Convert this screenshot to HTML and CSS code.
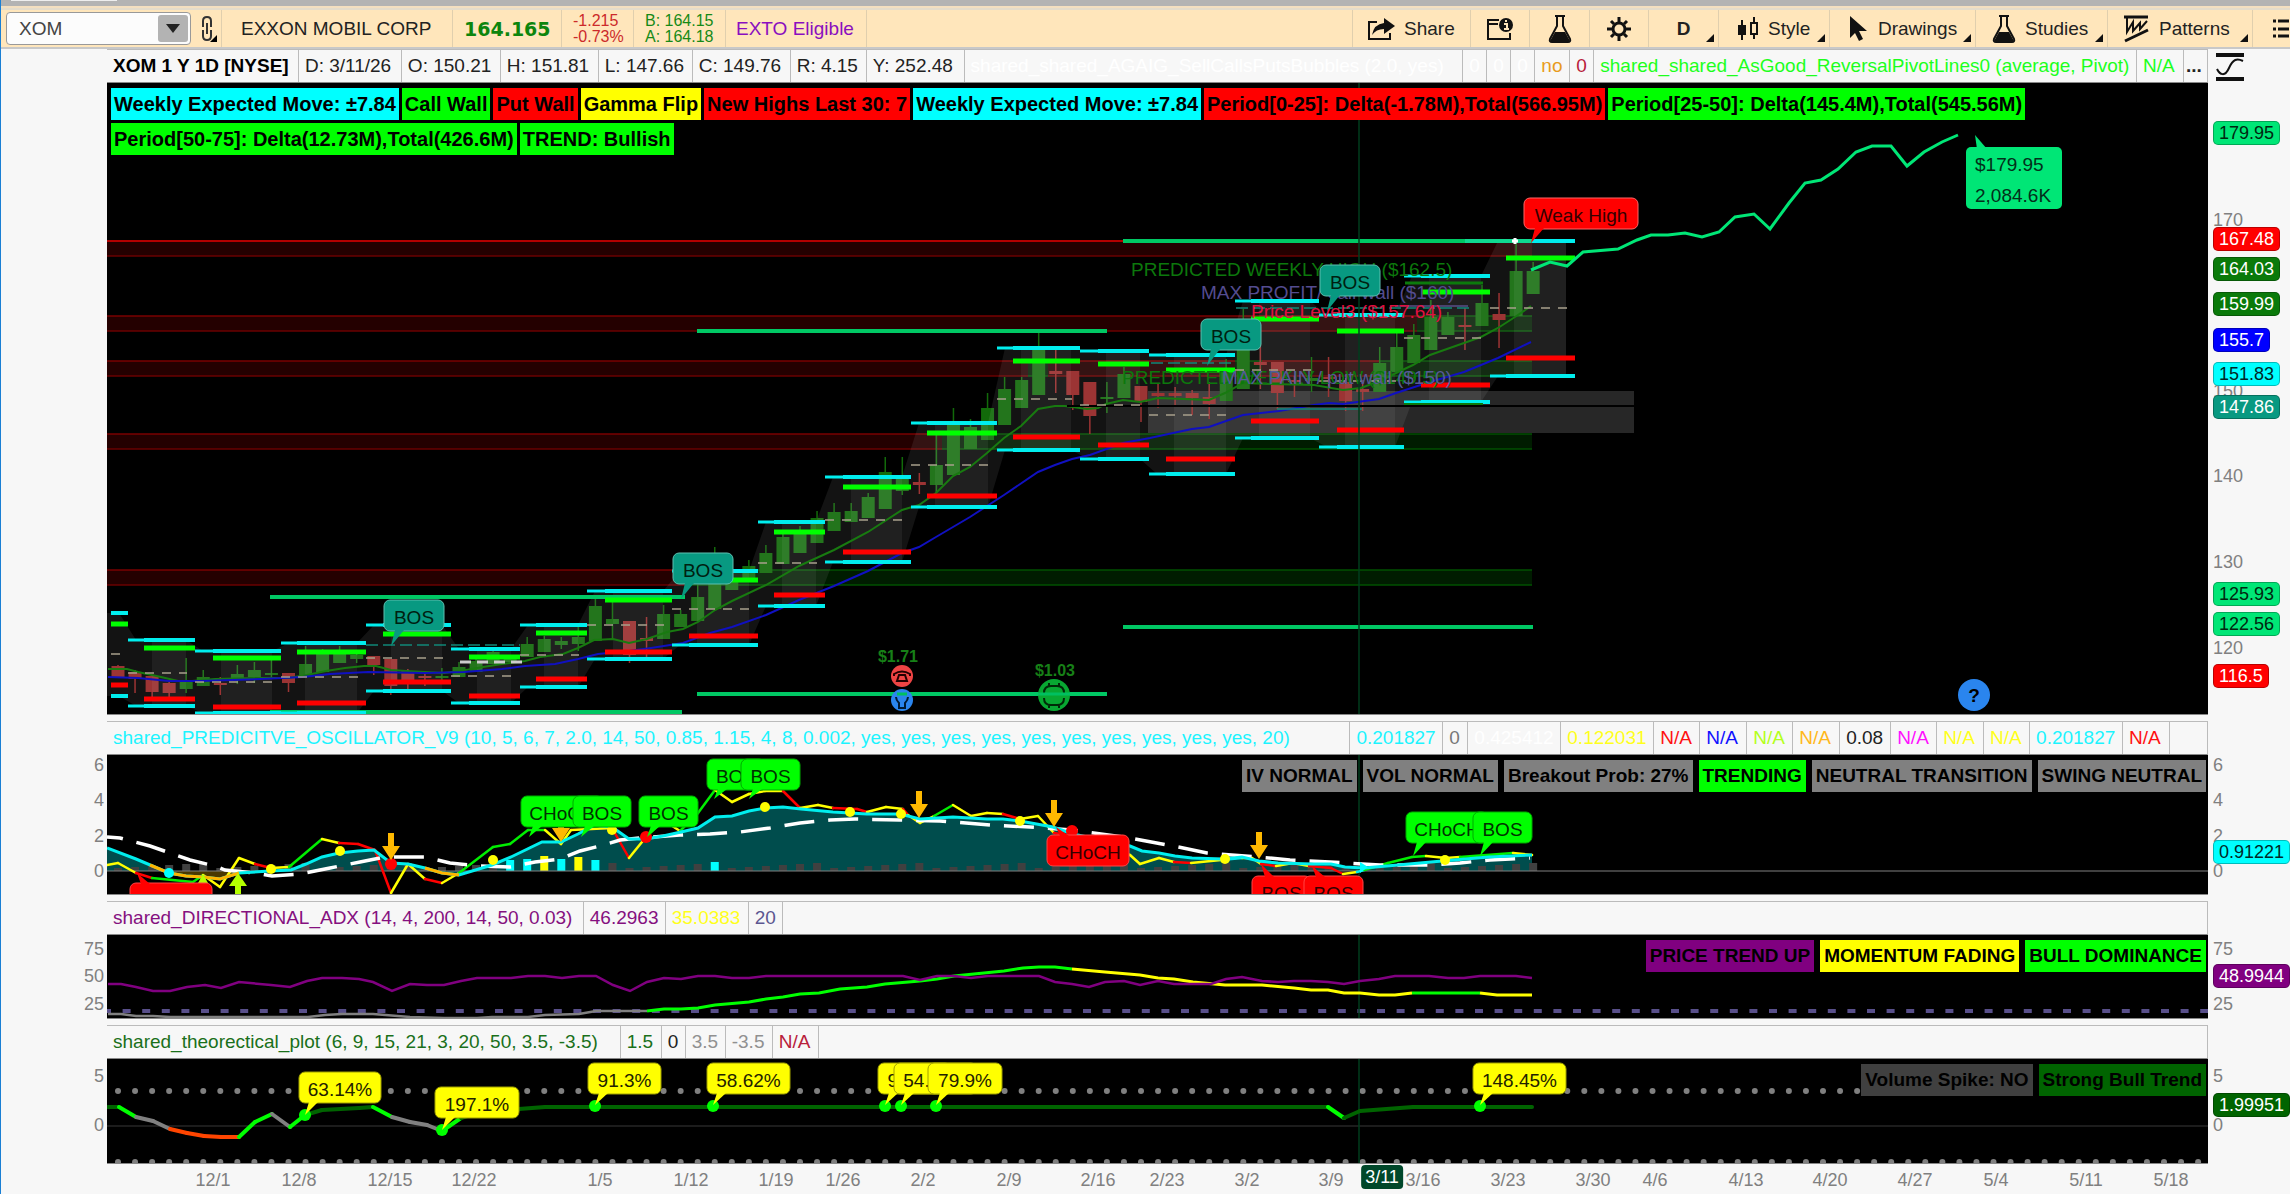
FILE: index.html
```html
<!DOCTYPE html>
<html lang="en">
<head>
<meta charset="utf-8">
<title>XOM - Charts</title>
<link rel="stylesheet" href="styles.css">
</head>
<body>
<svg class="defs" aria-hidden="true">
  <symbol id="flask" viewBox="0 0 24 28"><path d="M7 1h10M9 2v9L2 24q-1 3 2 3h16q3 0 2-3L15 11V2" fill="none" stroke="#111" stroke-width="2"/><path d="M7 17h10l5 9H2z" fill="#111"/></symbol>
</svg>
<div class="topstrip"><span class="tab"></span></div>
<header class="toolbar">
  <div class="seg symbol">
    <label class="symbolbox"><input type="text" value="XOM" aria-label="Symbol"><button class="drop" aria-label="Symbol list"></button></label>
    <button class="link" aria-label="Link color">
      <svg width="18" height="28" viewBox="0 0 18 28"><path d="M3 12V6q0-4 4-4t4 4v6M3 15v6q0 4 4 4t4-4v-6M7 8v11" fill="none" stroke="#333" stroke-width="2"/><path d="M17 20v7h-7z"/></svg>
    </button>
  </div>
  <div class="seg company">EXXON MOBIL CORP</div>
  <div class="seg price">164.165</div>
  <div class="seg change">-1.215<br>-0.73%</div>
  <div class="seg quote">B: 164.15<br>A: 164.18</div>
  <div class="seg exto">EXTO Eligible</div>
  <button class="seg share"><svg width="28" height="24" viewBox="0 0 28 24"><path d="M10 5H2v17h21v-6" fill="none" stroke="#111" stroke-width="2"/><path d="M17 1l11 8-11 8v-5Q9 12 5 18 7 7 17 6z" fill="#111"/></svg>Share</button>
  <button class="seg note" aria-label="News"><svg width="28" height="24" viewBox="0 0 28 24"><path d="M13 3H2v19h22v-6M2 7h10" fill="none" stroke="#111" stroke-width="2"/><circle cx="20" cy="8" r="7" fill="#111"/><path d="M18 7h3v5M18 12h5M20 3v2" stroke="#ffe6bb" stroke-width="2" fill="none"/></svg></button>
  <button class="seg lab" aria-label="Edit studies"><svg width="24" height="28"><use href="#flask"/></svg></button>
  <button class="seg gear" aria-label="Settings"><svg width="26" height="26" viewBox="-13 -13 26 26"><circle r="6" fill="none" stroke="#111" stroke-width="3"/><path d="M0-7v-5M0 7v5M-7 0h-5M7 0h5M5-5l3-3M-5-5l-3-3M5 5l3 3M-5 5l-3 3" stroke="#111" stroke-width="3"/></svg></button>
  <button class="seg period more">D</button>
  <button class="seg style more"><svg width="22" height="24" viewBox="0 0 22 24"><path d="M5 3v20M17 0v6M17 17v5" stroke="#111" stroke-width="2"/><path d="M1 8h8v10H1z" fill="#111"/><path d="M14 6h6v11h-6z" fill="none" stroke="#111" stroke-width="2"/></svg>Style</button>
  <button class="seg drawings more"><svg width="20" height="26" viewBox="0 0 20 26"><path d="M1 0v22l5-5 4 8 4-2-4-8h8z" fill="#111"/></svg>Drawings</button>
  <button class="seg studies more"><svg width="24" height="28"><use href="#flask"/></svg>Studies</button>
  <button class="seg patterns more"><svg width="26" height="28" viewBox="0 0 26 28"><path d="M0 2h24M1 26L24 15" stroke="#111" stroke-width="3"/><path d="M3 3v14l6-10v9l7-8v6l7-8" fill="none" stroke="#111" stroke-width="2"/></svg>Patterns</button>
  <button class="seg list" aria-label="Menu"><svg width="16" height="20" viewBox="0 0 16 20"><path d="M0 2h3M5 2h11M0 10h3M5 10h11M0 17h3M5 17h11" stroke="#111" stroke-width="3"/></svg></button>
</header>
<main>
  <section class="panel" id="main-panel">
    <div class="info info-main">
      <b class="black">XOM 1 Y 1D [NYSE]</b><span>D: 3/11/26</span><span>O: 150.21</span><span>H: 151.81</span><span>L: 147.66</span><span>C: 149.76</span><span>R: 4.15</span><span>Y: 252.48</span><span class="white">shared_shared_AGAIG_SellCallsPutsBubbles (2.0, yes)</span><span class="white">0</span><span class="white">0</span><span class="white">0</span><span class="orange">no</span><span class="crimson">0</span><span class="lime">shared_shared_AsGood_ReversalPivotLines0 (average, Pivot)</span><span class="lime">N/A</span><b class="dots">...</b>
    </div>
    <button class="corner" aria-label="Scale"><svg width="28" height="28" viewBox="0 0 28 28"><path d="M0 2h28M0 26h28" stroke="#111" stroke-width="4"/><path d="M1 16c3 6 8 8 12-1S21 5 27 8" fill="none" stroke="#111" stroke-width="2"/></svg></button>
    <div class="axis left"></div>
    <div class="chart">
      <svg viewBox="107 83 2101 631"></svg>
      <div class="chips chips-left">
        <span class="bg-cyan">Weekly Expected Move: ±7.84</span><span class="bg-lime">Call Wall</span><span class="bg-red">Put Wall</span><span class="bg-yellow">Gamma Flip</span><span class="bg-red">New Highs Last 30: 7</span><span class="bg-cyan">Weekly Expected Move: ±7.84</span><span class="bg-red">Period[0-25]: Delta(-1.78M),Total(566.95M)</span><span class="bg-lime">Period[25-50]: Delta(145.4M),Total(545.56M)</span><span class="bg-lime">Period[50-75]: Delta(12.73M),Total(426.6M)</span><span class="bg-lime">TREND: Bullish</span>
      </div>
    </div>
    <div class="axis right"></div>
  </section>
  <section class="panel" id="osc-panel">
    <div class="info info-osc">
      <span class="cyan">shared_PREDICITVE_OSCILLATOR_V9 (10, 5, 6, 7, 2.0, 14, 50, 0.85, 1.15, 4, 8, 0.002, yes, yes, yes, yes, yes, yes, yes, yes, yes, yes, 20)</span><span class="cyan">0.201827</span><span class="gray">0</span><span class="white">0.425412</span><span class="yellow">0.122031</span><span class="red">N/A</span><span class="blue">N/A</span><span class="chartreuse">N/A</span><span class="amber">N/A</span><span>0.08</span><span class="magenta">N/A</span><span class="yellow">N/A</span><span class="yellow">N/A</span><span class="cyan">0.201827</span><span class="red">N/A</span><span></span>
    </div>
    <div class="axis left"></div>
    <div class="chart">
      <svg viewBox="107 755 2101 139"></svg>
      <div class="chips chips-right">
        <span class="bg-gray">IV NORMAL</span><span class="bg-gray">VOL NORMAL</span><span class="bg-gray">Breakout Prob: 27%</span><span class="bg-lime">TRENDING</span><span class="bg-gray">NEUTRAL TRANSITION</span><span class="bg-gray">SWING NEUTRAL</span>
      </div>
    </div>
    <div class="axis right"></div>
  </section>
  <section class="panel" id="adx-panel">
    <div class="info info-adx">
      <span class="purple">shared_DIRECTIONAL_ADX (14, 4, 200, 14, 50, 0.03)</span><span class="purple">46.2963</span><span class="yellow">35.0383</span><span class="slate">20</span><span></span>
    </div>
    <div class="axis left"></div>
    <div class="chart">
      <svg viewBox="107 935 2101 83"></svg>
      <div class="chips chips-right">
        <span class="bg-purple">PRICE TREND UP</span><span class="bg-yellow">MOMENTUM FADING</span><span class="bg-lime">BULL DOMINANCE</span>
      </div>
    </div>
    <div class="axis right"></div>
  </section>
  <section class="panel" id="theo-panel">
    <div class="info info-theo">
      <span class="green">shared_theorectical_plot (6, 9, 15, 21, 3, 20, 50, 3.5, -3.5)</span><span class="green">1.5</span><span>0</span><span class="silver">3.5</span><span class="silver">-3.5</span><span class="crimson">N/A</span><span></span>
    </div>
    <div class="axis left"></div>
    <div class="chart">
      <svg viewBox="107 1059 2101 104"></svg>
      <div class="chips chips-right">
        <span class="bg-dim">Volume Spike: NO</span><span class="bg-green">Strong Bull Trend</span>
      </div>
    </div>
    <div class="axis right"></div>
  </section>
  <div class="dates"></div>
</main>
<script src="charts.js"></script>
</body>
</html>
```
FILE: styles.css
```css
* { box-sizing: border-box; }
body {
  margin: 0;
  border-left: 1px solid #1a7fd4;
  background: #f7f7f7;
  color: #222;
  font: 19px/24px "Liberation Sans", Arial, sans-serif;
}
button, input { font: inherit; color: inherit; margin: 0; padding: 0; border: 0; background: none; }
svg { display: block; flex: none; }
.defs { position: absolute; width: 0; height: 0; }

.topstrip { height: 8px; background: #b3b3b3; border-bottom: 2px solid #f3dfc0; }
.tab { display: block; width: 106px; height: 1px; margin-left: 10px; background: #eee; }

.toolbar { display: flex; height: 41px; background: #ffe6bb; border-top: 2px solid #e4dccb; border-bottom: 2px solid #c8c8c8; }
.seg { display: flex; align-items: center; gap: 9px; flex: none; border-right: 1px solid #e0cfae; white-space: nowrap; }
.symbol { width: 221px; padding-left: 5px; }
.symbolbox { display: flex; width: 185px; height: 33px; padding: 2px; border: 1px solid #999; border-radius: 4px; background: #fcfcfc; }
.symbolbox input { flex: 1; min-width: 0; padding-left: 10px; color: #444; }
.drop { width: 30px; border-radius: 3px; background: #b3b3b3; }
.drop::after { content: ""; display: block; margin: auto; width: 0; border: 7px solid transparent; border-top: 9px solid #222; border-bottom: 0; }
.company { width: 231px; padding-left: 19px; }
.price { width: 109px; padding-left: 11px; font: bold 19px/24px "DejaVu Sans", sans-serif; color: #0d850d; }
.change, .quote { font-size: 16px; line-height: 16px; padding-left: 11px; }
.change { width: 72px; color: #cc2a2a; }
.quote { width: 92px; color: #168a16; }
.exto { width: 141px; padding-left: 10px; color: #8a0fbf; }
.share { width: 119px; margin-left: auto; padding-left: 14px; border-left: 1px solid #e0cfae; }
.note, .lab, .gear, .period { justify-content: center; }
.note, .lab, .gear { width: 60px; }
.note, .gear { width: 59px; }
.period { width: 70px; font-weight: bold; }
.style { width: 111px; padding-left: 18px; }
.drawings { width: 146px; padding-left: 19px; }
.studies { width: 132px; padding-left: 16px; }
.patterns { width: 145px; padding-left: 16px; }
.list { width: 37px; padding-left: 20px; border: 0; overflow: hidden; }
.more { position: relative; }
.more::after { content: ""; position: absolute; right: 4px; bottom: 5px; border: 4px solid #111; border-top-color: transparent; border-left-color: transparent; }

.panel { display: grid; grid-template-columns: 106px minmax(0, 1fr) 82px; margin-bottom: 6px; }
#theo-panel { margin-bottom: 0; }
.info { display: grid; grid-column: 2; height: 34px; border: 1px solid #bbb; border-bottom-color: #888; border-left-width: 0; background: #f7f7f7; }
.info > * { display: flex; align-items: center; padding-left: 6px; border-right: 1px solid #bbb; white-space: nowrap; overflow: hidden; }
.info > :last-child { border-right: 0; }
.info-main { grid-template-columns: 192fr 103fr 99fr 98fr 94fr 98fr 76fr 98fr 499fr 24fr 24fr 24fr 35fr 24fr 543fr 47fr 23fr; }
.info-osc { grid-template-columns: 1244fr 93fr 25fr 93fr 93fr 46fr 47fr 46fr 47fr 51fr 46fr 47fr 46fr 93fr 47fr 37fr; }
.info-adx { grid-template-columns: 477fr 82fr 83fr 34fr 1425fr; }
.info-theo { grid-template-columns: 514fr 41fr 24fr 40fr 47fr 46fr 1389fr; }
.info .dots { padding-left: 2px; }
.corner { grid-column: 3; padding: 2px 0 0 8px; }
.axis.left { grid-column: 1; }
.chart { grid-column: 2; position: relative; background: #000; border-bottom: 1px solid #888; }
.chart svg { width: 100%; height: auto; }
.chart text { font-size: 19px; }
.chart text.small { font-size: 16px; font-weight: bold; }

.chips { position: absolute; top: 5px; display: flex; flex-wrap: wrap; font-weight: bold; line-height: 32px; color: #000; }
.chips span { white-space: nowrap; }
.chips-left { left: 4px; right: 4px; gap: 3px; font-size: 20px; }
.chips-left span { padding: 0 3px; }
.chips-right { right: 2px; gap: 6px; font-size: 19px; }
.chips-right span { padding: 0 4px; }

.axis { position: relative; font-size: 18px; line-height: 24px; color: #808080; }
.axis span { position: absolute; transform: translateY(-50%); white-space: nowrap; }
.left span { right: 3px; }
.right span { left: 5px; }
.right .tag { padding: 0 5px; border: 1px solid #0004; border-radius: 5px; line-height: 22px; }
.dates { position: relative; height: 30px; margin: 0 82px 0 106px; font-size: 18px; color: #808080; }
.dates span { position: absolute; top: 4px; transform: translateX(-50%); }
.dates .now { top: 1px; padding: 0 4px; border-radius: 4px; background: #00472a; color: #fff; }

.black { color: #000; }
.white { color: #fff; }
.orange { color: #e89b1c; }
.amber { color: #ffb81c; }
.crimson { color: #b8203a; }
.lime { color: #1cff1c; }
.cyan { color: #1cf4ff; }
.gray { color: #777; }
.yellow { color: #ffff1c; }
.red { color: #ff1010; }
.blue { color: #1010ff; }
.chartreuse { color: #b4ff1c; }
.magenta { color: #ff10ff; }
.purple { color: #85107f; }
.slate { color: #5c5690; }
.green { color: #1a701a; }
.silver { color: #909090; }
.bg-cyan { background: #0ff; }
.bg-lime { background: #0f0; }
.bg-red { background: #f00; }
.bg-yellow { background: #ff0; }
.bg-gray { background: #808080; }
.bg-purple { background: #800080; }
.bg-dim { background: #404040; }
.bg-green { background: #006400; }
```
FILE: charts.js
```js
const NS = "http://www.w3.org/2000/svg";
const barX = i => 118 + 17.05 * i;
const canvas = id => document.querySelector(`#${id} .chart svg`);

function el(parent, tag, attrs, text) {
  const node = document.createElementNS(NS, tag);
  for (const key in attrs) node.setAttribute(key, attrs[key]);
  if (text) node.textContent = text;
  parent.append(node);
  return node;
}
const rect = (p, x, y, w, h, fill, more) => el(p, "rect", { x, y, width: w, height: h, fill, ...more });
const line = (p, x1, y1, x2, y2, stroke, width = 1, more) =>
  el(p, "line", { x1, y1, x2, y2, stroke, "stroke-width": width, ...more });
const curve = (p, points, stroke, width, more) =>
  el(p, "polyline", { points, fill: "none", stroke, "stroke-width": width, ...more });
const write = (p, x, y, text, fill, more) => el(p, "text", { x, y, fill, ...more }, text);

/* Rounded label with a pointer to (tx, ty) */
function callout(p, x, y, w, text, tx, ty, fill, stroke, ink = "#002010") {
  const h = 31, below = ty > y + h / 2;
  const a = Math.min(Math.max(tx + 4, x + 6), x + w - 18);
  const edge = below ? y + h - 1 : y + 1;
  rect(p, x, y, w, h, fill, { rx: 6, stroke });
  el(p, "polygon", { points: `${a},${edge} ${tx},${ty} ${a + 9},${edge}`, fill });
  write(p, x + w / 2, y + 24, text, ink, { "text-anchor": "middle" });
}
/* Polyline whose colour changes along the way: [x, y, colour of the piece that ends here] */
function segments(p, pts, width) {
  for (let i = 1; i < pts.length; i++)
    line(p, pts[i - 1][0], pts[i - 1][1], pts[i][0], pts[i][1], pts[i][2], width, { "stroke-linecap": "round" });
}

/* ---------- price chart ---------- */
const price = canvas("main-panel");

function zone(y, pieces) {
  let x = 107;
  for (const [end, kind] of pieces) {
    const red = kind === "r";
    rect(price, x, y, end - x, 15, red ? "#240000" : "#001c00");
    line(price, x, y, end, y, red ? "#7a0000" : "#005000", 1.5);
    line(price, x, y + 15, end, y + 15, red ? "#6a0000" : "#005000", 1.5);
    x = end;
  }
}
zone(241, [[1532, "r"]]);
line(price, 107, 241, 1123, 241, "#d00000", 1.5);
zone(316, [[1417, "r"], [1532, "g"]]);
zone(361, [[1028, "r"], [1048, "g"], [1235, "r"], [1262, "g"], [1380, "r"], [1532, "g"]]);
zone(434, [[942, "r"], [1532, "g"]]);
zone(570, [[690, "r"], [1532, "g"]]);
rect(price, 1148, 391, 486, 42, "#272727");

/* bar, high, body top, body bottom, low, colour */
const candles = [
  [0,665,666,677,678,"r"],[1,670,672,679,693,"r"],[2,675,676,692,697,"r"],[3,682,683,693,697,"r"],[4,658,682,689,693,"g"],
  [5,670,677,686,686,"g"],[6,677,683,685,695,"r"],[7,665,674,679,684,"g"],[8,662,670,677,683,"g"],[9,660,673,675,677,"g"],
  [10,673,673,683,692,"r"],[11,646,664,676,676,"g"],[12,649,654,672,672,"g"],[13,646,654,663,663,"g"],[14,653,655,659,663,"g"],
  [15,656,656,665,675,"r"],[16,659,659,686,695,"r"],[17,669,671,681,690,"r"],[18,673,676,678,686,"r"],[19,668,676,678,680,"g"],
  [20,662,667,677,677,"g"],[21,658,661,672,672,"g"],[22,650,652,664,664,"g"],[23,656,658,662,662,"g"],[24,637,644,657,657,"g"],
  [25,636,639,652,652,"g"],[26,637,641,645,649,"g"],[27,626,637,644,651,"g"],[28,597,606,641,641,"g"],[29,600,619,624,639,"g"],
  [30,621,621,655,663,"r"],[31,617,638,641,658,"r"],[32,605,614,639,639,"g"],[33,610,614,627,627,"g"],[34,585,597,621,621,"g"],
  [35,547,583,609,609,"g"],[36,570,578,590,590,"g"],[37,560,566,578,578,"g"],[38,545,553,573,573,"g"],[39,533,537,564,564,"g"],
  [40,526,532,553,553,"g"],[41,511,518,543,543,"g"],[42,503,512,531,531,"g"],[43,503,511,522,522,"g"],[44,493,497,518,518,"g"],
  [45,457,472,509,509,"g"],[46,457,479,491,495,"g"],[47,473,482,485,494,"r"],[48,435,465,485,493,"g"],[49,408,424,475,475,"g"],
  [50,419,427,449,449,"g"],[51,393,408,440,440,"g"],[52,377,389,425,425,"g"],[53,377,380,408,408,"g"],[54,332,348,395,395,"g"],
  [55,350,371,374,393,"r"],[56,371,371,395,410,"r"],[57,382,382,416,434,"r"],[58,382,397,399,413,"g"],[59,367,374,398,398,"g"],
  [60,386,386,402,422,"r"],[61,383,393,396,408,"r"],[62,387,393,396,407,"r"],[63,390,393,398,415,"r"],[64,382,397,404,419,"r"],
  [65,359,372,401,401,"g"],[66,309,350,389,389,"g"],[67,327,362,365,389,"r"],[68,362,362,393,409,"r"],[69,376,380,382,397,"r"],
  [70,357,378,381,392,"g"],[71,357,377,379,397,"r"],[72,378,382,401,411,"r"],[73,380,389,392,411,"r"],[74,347,363,392,392,"g"],
  [75,333,347,372,372,"g"],[76,324,335,363,363,"g"],[77,300,317,350,350,"g"],[78,312,317,335,335,"g"],[79,308,325,327,350,"r"],
  [80,285,303,326,326,"g"],[81,293,314,320,348,"r"],[82,244,271,316,316,"g"],[83,262,271,294,294,"g"]
];
for (const [i, high, top, bottom, low, c] of candles) {
  const x = barX(i), fill = c === "g" ? "#126a0a" : "#952424";
  line(price, x, high, x, low, fill, 1.5);
  rect(price, x - 6.5, top, 13, bottom - top, fill);
}

/* week start, start of the wide lines, end, upper, call, middle, put, lower */
const weeks = [
  [111,111,128,613,624,654,685,696],[128,144,195,640,648,673,699,706],[195,213,281,651,658,682,707,713],
  [281,297,366,643,652,677,703,713],[366,383,451,625,634,658,682,691],[451,469,520,649,657,676,696,703],
  [520,536,587,625,633,655,679,687],[587,605,672,591,600,625,652,659],[672,689,758,571,580,609,636,645],
  [758,774,825,522,532,563,595,606],[825,843,911,477,487,520,552,562],[911,927,997,423,433,465,496,507],
  [997,1013,1080,348,361,399,437,450],[1080,1098,1149,351,364,405,445,459],[1149,1166,1235,355,370,415,459,474],
  [1235,1251,1319,301,319,370,421,438],[1319,1337,1404,315,331,381,430,447],[1404,1421,1490,276,292,338,385,402],
  [1490,1506,1575,241,258,308,358,376]
];
const upper = [], lower = [];
weeks.forEach(([a, , b, top, , , , low], n) => {
  const start = n ? a + 8 : 107;
  upper.push(`${start},${top}`, `${b - 9},${top}`);
  lower.unshift(`${b - 9},${low}`, `${start},${low}`);
});
el(price, "polygon", { points: upper.concat(lower).join(" "), fill: "#fff", "fill-opacity": 0.075 });
for (const [, w, b, top, , , , low] of weeks)
  rect(price, w + 8, top, Math.max(b - w - 17, 0), low - top, "#fff", { "fill-opacity": 0.06 });

const greenAverage = "108,669 127,669 138,672 161,677 178,681 192,681 215,679 261,678 288,678 307,675 326,671 345,668 364,666 376,666 391,670 406,671 425,672 444,673 460,671 483,667 502,664 525,661 540,657 563,654 578,648 594,640 613,639 629,643 647,639 667,632 683,629 698,622 715,610 732,601 766,585 799,566 834,550 868,532 902,510 919,505 936,493 953,476 970,467 987,453 1004,438 1021,426 1038,409 1055,406 1065,406 1087,409 1098,408 1106,404 1123,400 1140,402 1158,398 1209,400 1225,393 1243,383 1271,384 1314,385 1343,390 1361,388 1382,380 1396,373 1413,365 1430,355 1464,343 1481,337 1498,328 1515,317 1531,306";
const blueAverage = "108,677 138,678 169,681 200,681 261,679 303,677 330,674 368,672 425,673 464,672 502,669 525,666 555,664 578,659 598,654 629,651 651,648 683,643 710,633 732,627 766,615 799,600 834,586 868,571 902,553 919,547 936,537 970,517 1004,495 1038,472 1055,465 1072,459 1090,455 1123,443 1150,438 1173,433 1192,429 1209,427 1243,415 1279,411 1314,405 1329,403 1343,404 1379,399 1396,393 1430,382 1464,372 1498,358 1531,342";
curve(price, greenAverage, "#187a10", 2);
curve(price, blueAverage, "#1010c0", 2);
line(price, 1067, 406, 1634, 406, "#000", 2);

for (const [x1, x2, y] of [[270,685,597],[270,682,712],[697,1107,331],[697,1107,694],[1123,1533,241],[1123,1533,627]])
  line(price, x1, y, x2, y, "#00c864", 4);
for (const [a, w, b, top, call, mid, put, low] of weeks) {
  for (const y of [top, low]) {
    line(price, a, y, b, y, "#0ee", 3);
    line(price, w, y, b, y, "#0ee", 4);
  }
  line(price, w, call, b, call, "#0f0", 5);
  line(price, w, put, b, put, "#f00", 5);
  line(price, a, mid, b - 8, mid, "#a8a08c", 1.5, { "stroke-dasharray": "9 8" });
}
line(price, 1533, 241, 1560, 241, "#0ee", 4);
line(price, 1465, 241, 1532, 241, "#10d890", 4);
for (const [x1, x2, y] of [[366,520,645],[1151,1232,363],[1236,1470,308]])
  line(price, x1, y, x2, y, "#108878", 1.5, { "stroke-dasharray": "12 5" });
line(price, 1277, 409, 1362, 409, "#108878", 1.5);
line(price, 460, 662, 527, 662, "#ccc", 3, { "stroke-dasharray": "11 6" });
line(price, 1405, 283, 1483, 283, "#0c7a0c", 3);
line(price, 1404, 404, 1483, 404, "#0c7a0c", 2);
line(price, 1395, 306, 1468, 306, "#584f8a", 1.5);

write(price, 1131, 276, "PREDICTED WEEKLY HIGH ($162.5)", "#0c780c");
write(price, 1201, 299, "MAX PROFIT/ call wall ($160)", "#544c90");
write(price, 1251, 318, "Price Level3 ($157.64)", "#e01040");
write(price, 1122, 384, "PREDICTED WEEKLY LOW ($149.5)", "#0c780c");
write(price, 1222, 384, "MAX PAIN / put wall ($150)", "#565a98");
line(price, 1359, 83, 1359, 714, "#003c1c", 1.5);

curve(price, "1531,270 1550,262 1567,266 1583,252 1618,249 1637,240 1651,235 1668,235 1685,233 1702,237 1719,232 1735,217 1754,214 1770,229 1789,203 1805,183 1821,180 1838,169 1856,152 1872,146 1891,146 1907,166 1924,152 1942,142 1958,135", "#00e676", 3);
callout(price, 384, 600, 60, "BOS", 391, 646, "#089981", "#5cc0b0");
callout(price, 673, 553, 60, "BOS", 681, 599, "#089981", "#5cc0b0");
callout(price, 1201, 319, 60, "BOS", 1207, 366, "#089981", "#5cc0b0");
callout(price, 1320, 265, 60, "BOS", 1327, 311, "#089981", "#5cc0b0");
callout(price, 1524, 198, 114, "Weak High", 1531, 243, "#f00", "#f66", "#300");
el(price, "path", { d: "M1512 241h6M1515 238v6", stroke: "#fff", "stroke-width": 3 });
el(price, "polygon", { points: "1977,149 1975,135 1987,149", fill: "#00e676" });
rect(price, 1966, 147, 96, 62, "#00e676", { rx: 5 });
write(price, 1975, 171, "$179.95", "#03301a");
write(price, 1975, 202, "2,084.6K", "#03301a");

const event = { class: "small", "text-anchor": "middle" };
write(price, 898, 662, "$1.71", "#178017", event);
write(price, 1055, 676, "$1.03", "#178017", event);
el(price, "circle", { cx: 902, cy: 676, r: 11, fill: "#ee4444" });
el(price, "path", { d: "M894 676v-2q8-5 16 0v2M897 681l2-6h6l2 6z", fill: "none", stroke: "#200", "stroke-width": 2 });
el(price, "circle", { cx: 902, cy: 700, r: 11, fill: "#2a85ee" });
el(price, "path", { d: "M899 708v-5q-3-3-3-6M905 708v-5q3-3 3-6M898 708h8", fill: "none", stroke: "#001a33", "stroke-width": 2 });
el(price, "circle", { cx: 1054, cy: 695, r: 16, fill: "#08a832" });
el(price, "path", { d: "M1044 693q0-7 7-7h6q7 0 7 7M1044 698q0 7 7 7h6q7 0 7-7M1049 683v3M1059 683v3M1049 705v3M1059 705v3", fill: "none", stroke: "#002a08", "stroke-width": 2 });
line(price, 897, 694, 907, 694, "#00c060", 3);
line(price, 1038, 694, 1070, 694, "#00c060", 3);
el(price, "circle", { cx: 1974, cy: 695, r: 16, fill: "#2a85ee" });
write(price, 1974, 702, "?", "#000", { "text-anchor": "middle", "font-weight": "bold" });

/* ---------- oscillator ---------- */
const osc = canvas("osc-panel");
const fast = "107,848 136,859 169,873 186,876 203,877 220,879 239,873 270,871 291,870 306,864 322,857 339,853 358,851 374,850 391,863 408,864 425,868 442,873 459,875 492,865 511,857 542,842 561,842 578,834 595,825 612,827 629,839 646,839 663,836 681,832 698,828 715,817 732,816 749,811 765,808 783,807 801,809 833,812 867,814 900,814 920,819 953,817 987,819 1003,819 1020,821 1053,827 1073,834 1130,846 1142,851 1159,853 1175,856 1192,858 1223,859 1242,857 1259,861 1278,863 1312,864 1331,864 1345,867 1364,868 1398,865 1431,862 1465,859 1489,857 1532,855";
el(osc, "polygon", { points: `107,871 ${fast} 1532,871`, fill: "#004d4d" });
el(osc, "polygon", { points: "165,871 169,873 186,876 203,877 220,879 243,871", fill: "#4a3800" });
const tinted = { 23: ["#0ff", 11], 24: ["#0ff", 12], 25: ["#ff0", 15], 26: ["#0ff", 12], 27: ["#ff0", 14], 28: ["#0ff", 11], 35: ["#0ff", 9] };
for (let i = 0; i <= 83; i++) {
  const [fill, h] = tinted[i] || ["#404040", 3 + (i * 7) % 6];
  rect(osc, barX(i) - 4, 871 - h, 8, h, fill);
}
line(osc, 107, 871, 2208, 871, "#808080", 1);
line(osc, 1359, 755, 1359, 894, "#003c1c", 1.5);
const Y = "#ff0", R = "#f00", G = "#0e0", C = "#0ee";
segments(osc, [
  [107,865],[118,863,Y],[136,873,Y],[152,878,R],[193,882,G],[203,875,G],[220,887,Y],[239,858,Y],[255,864,Y],[271,868,R],[289,867,Y],[322,839,G],[339,843,Y],[358,844,R],[375,850,R],[391,893,R],[408,864,Y],[425,879,Y],[442,883,R],[459,873,Y],[493,847,G],[510,844,G],[528,830,G],[545,830,G],[561,844,Y],[571,830,Y],[612,828,Y],[629,858,R],[646,837,Y],[663,820,G],[680,831,Y],[698,813,G],[715,790,G],[732,802,Y],[749,794,Y],[765,791,Y],[783,791,Y],[800,808,R],[818,805,Y],[833,808,Y],[857,809,R],[867,812,R],[886,807,Y],[903,809,Y],[908,815,R],[920,823,Y],[934,816,Y],[953,805,G],[971,816,Y],[987,813,Y],[1003,814,Y],[1020,819,R],[1038,816,Y],[1054,833,Y],[1072,836,R],[1130,855,Y],[1140,864,Y],[1159,858,Y],[1174,862,Y],[1191,863,R],[1221,860,Y],[1242,858,C],[1252,858,Y],[1261,864,Y],[1276,866,R],[1293,863,Y],[1309,866,Y],[1331,868,R],[1343,874,R],[1357,872,Y],[1364,870,C],[1388,863,G],[1412,857,G],[1426,856,G],[1446,858,Y],[1460,857,Y],[1513,853,G],[1532,855,Y]
], 2.5);
curve(osc, "107,837 120,838 150,846 170,853 190,860 215,866 225,870 255,873 272,876 300,874 330,868 360,862 385,857 425,857 450,863 480,866 510,867 535,862 560,859 580,851 600,846 620,840 640,838 680,835 710,834 740,832 770,828 800,823 830,820 855,819 900,820 940,821 990,825 1030,827 1072,830 1087,832 1130,838 1178,847 1207,853 1259,857 1290,860 1330,862 1380,865 1430,865 1460,863 1490,860 1530,858", "#fff", 3.5, { "stroke-dasharray": "30 14", "stroke-dashoffset": 14 });
curve(osc, fast, "#0ee", 3);
curve(osc, "150,865 169,873 186,876 203,877 220,879 239,873", "#ffb400", 3);
curve(osc, "425,868 442,873 459,875", "#ffb400", 3);
for (const [x, y] of [[271,869],[340,851],[493,860],[612,830],[765,807],[850,812],[901,814],[1020,821],[1225,859],[1445,860]])
  el(osc, "circle", { cx: x, cy: y, r: 5, fill: "#ff0" });
for (const [x, y] of [[391,864],[646,837],[1072,831]]) el(osc, "circle", { cx: x, cy: y, r: 6, fill: "#f00" });
el(osc, "circle", { cx: 169, cy: 873, r: 5, fill: "#0ff" });
el(osc, "polygon", { points: "1360,862 1360,873 1368,867", fill: "#0ff" });
for (const [x, y] of [[391,860],[561,842],[919,818],[1054,827],[1259,859]])
  el(osc, "path", { d: `M${x} ${y}l-9-14h6v-13h6v13h6z`, fill: "#ffb900" });
el(osc, "path", { d: "M238 873l-9 13h6v10h6v-10h6z", fill: "#b4ff00" });
el(osc, "path", { d: "M203 874l-5 9h10z", fill: "#b4ff00" });
const pos = ["#0f0", "#0a0", "#003000"], neg = ["#f00", "#f44", "#300"];
callout(osc, 521, 796, 82, "CHoCH", 529, 837, ...pos);
callout(osc, 573, 796, 58, "BOS", 581, 837, ...pos);
callout(osc, 639, 796, 59, "BOS", 647, 837, ...pos);
callout(osc, 707, 759, 58, "BOS", 714, 799, ...pos);
callout(osc, 741, 759, 59, "BOS", 749, 799, ...pos);
callout(osc, 1406, 812, 82, "CHoCH", 1413, 856, ...pos);
callout(osc, 1473, 812, 59, "BOS", 1480, 856, ...pos);
callout(osc, 1047, 835, 82, "CHoCH", 1056, 827, ...neg);
callout(osc, 1252, 876, 59, "BOS", 1261, 864, ...neg);
callout(osc, 1304, 876, 59, "BOS", 1312, 866, ...neg);
callout(osc, 130, 883, 82, "CHoCH", 137, 873, ...neg);

/* ---------- directional ADX ---------- */
const adx = canvas("adx-panel");
line(adx, 107, 1011, 2208, 1011, "#584f8a", 4, { "stroke-dasharray": "8 11.6", "stroke-dashoffset": 4 });
line(adx, 1359, 935, 1359, 1018, "#003c1c", 1.5);
curve(adx, "108,1014 121,1014 136,1016 153,1016 170,1017 308,1017 325,1015 342,1014 373,1014 410,1017 444,1018 477,1018 492,1017 528,1017 545,1015 579,1014 596,1011 647,1011", "#808080", 2.5);
curve(adx, "647,1011 664,1009 681,1009 698,1008 715,1005 749,1002 766,999 783,997 800,994 819,993 840,989 867,987 885,984 920,981 937,979 954,976 1004,971 1023,968 1039,967 1055,967 1072,969", "#0f0", 3);
curve(adx, "1072,969 1105,972 1140,975 1158,978 1174,979 1193,982 1225,985 1262,985 1294,988 1311,990 1328,990 1344,993 1360,993 1379,995 1395,995 1412,993", "#ff0", 3);
curve(adx, "1412,993 1480,993", "#0f0", 3);
curve(adx, "1480,993 1497,995 1532,995", "#ff0", 3);
curve(adx, "108,984 121,984 136,987 153,991 170,991 187,987 205,985 221,988 239,982 271,985 290,987 307,981 322,978 342,978 359,979 373,982 392,991 410,984 427,985 444,985 461,981 477,978 511,978 528,976 545,976 562,978 579,976 596,976 613,985 630,991 647,982 664,978 681,979 698,976 715,976 732,978 749,978 766,976 903,976 920,980 937,976 954,976 971,978 988,976 1039,976 1055,982 1072,984 1089,987 1105,982 1124,981 1140,985 1158,981 1174,984 1211,984 1226,979 1242,977 1262,981 1278,982 1294,981 1311,981 1328,982 1344,984 1360,981 1379,979 1395,976 1429,976 1448,978 1464,978 1480,976 1516,976 1532,978", "#800080", 2.5);

/* ---------- theoretical plot ---------- */
const theo = canvas("theo-panel");
for (let i = 0; i < 123; i++)
  for (const y of [1091, 1162]) el(theo, "circle", { cx: barX(i), cy: y, r: 3, fill: "#808080" });
line(theo, 107, 1126, 2208, 1126, "#383838", 1);
line(theo, 1359, 1059, 1359, 1163, "#003c1c", 1.5);
const D = "#006400", L = "#0f0", S = "#808080", O = "#ff4500";
segments(theo, [
  [108,1107],[119,1107,D],[136,1117,L],[153,1121,S],[170,1129,S],[187,1133,O],[204,1136,O],[221,1137,O],[239,1137,O],[255,1122,L],[272,1114,L],[290,1127,S],[305,1115,L],[322,1110,D],[359,1108,D],[373,1107,D],[392,1117,L],[410,1122,S],[427,1125,S],[442,1131,S],[461,1118,L],[477,1113,D],[519,1109,D],[545,1107,D],[1328,1107,D],[1344,1118,L],[1360,1111,D],[1413,1107,D],[1532,1107,D]
], 4);
for (const [x, y] of [[305,1115],[442,1130],[595,1106],[713,1106],[885,1106],[901,1106],[936,1106],[1480,1106]])
  el(theo, "circle", { cx: x, cy: y, r: 6, fill: "#0f0" });
for (const [x, y, w, text, tx, ty] of [
  [299,1072,82,"63.14%",305,1115],[435,1087,84,"197.1%",442,1130],[588,1063,73,"91.3%",595,1105],[707,1063,83,"58.62%",713,1105],
  [878,1063,73,"91.5%",885,1105],[894,1063,83,"54.25%",901,1105],[928,1063,74,"79.9%",936,1105],[1473,1063,93,"148.45%",1480,1105]
]) callout(theo, x, y, w, text, tx, ty, "#ff0", "#a0a000", "#222200");

/* ---------- axes ---------- */
function axis(id, side, top, height, labels) {
  const box = document.querySelector(`#${id} .axis.${side}`);
  for (const [text, y, background, color] of labels) {
    const span = document.createElement("span");
    span.textContent = text;
    span.style.top = `${(y - top) / height * 100}%`;
    if (background) {
      span.className = "tag";
      span.style.background = background;
      span.style.color = color;
    }
    box.append(span);
  }
}
axis("main-panel", "right", 83, 632, [
  ["170",220],["150",391],["140",476],["130",562],["120",648],
  ["179.95",133,"#00e676","#002810"],["167.48",239,"#f00","#fff"],["164.03",269,"#0a7a0a","#fff"],["159.99",304,"#0a7a0a","#fff"],
  ["155.7",340,"#00f","#fff"],["151.83",374,"#0ff","#002828"],["147.86",407,"#089981","#fff"],["125.93",594,"#00e676","#002810"],
  ["122.56",624,"#00e676","#002810"],["116.5",676,"#f00","#fff"]
]);
axis("osc-panel", "left", 755, 140, [["6",765],["4",800],["2",836],["0",871]]);
axis("osc-panel", "right", 755, 140, [["6",765],["4",800],["2",836],["0",871],["0.91221",852,"#0ff","#002828"]]);
axis("adx-panel", "left", 935, 84, [["75",949],["50",976],["25",1004]]);
axis("adx-panel", "right", 935, 84, [["75",949],["25",1004],["48.9944",976,"#800080","#fff"]]);
axis("theo-panel", "left", 1059, 105, [["5",1076],["0",1125]]);
axis("theo-panel", "right", 1059, 105, [["5",1076],["0",1125],["1.99951",1105,"#006400","#fff"]]);

const dates = document.querySelector(".dates");
for (const [text, x] of [["12/1",213],["12/8",299],["12/15",390],["12/22",474],["1/5",600],["1/12",691],["1/19",776],["1/26",843],["2/2",923],["2/9",1009],["2/16",1098],["2/23",1167],["3/2",1247],["3/9",1331],["3/16",1423],["3/23",1508],["3/30",1593],["4/6",1655],["4/13",1746],["4/20",1830],["4/27",1915],["5/4",1996],["5/11",2086],["5/18",2171],["3/11",1382]]) {
  const span = document.createElement("span");
  span.textContent = text;
  span.style.left = `${(x - 107) / 2101 * 100}%`;
  if (text === "3/11") span.className = "now";
  dates.append(span);
}
```
